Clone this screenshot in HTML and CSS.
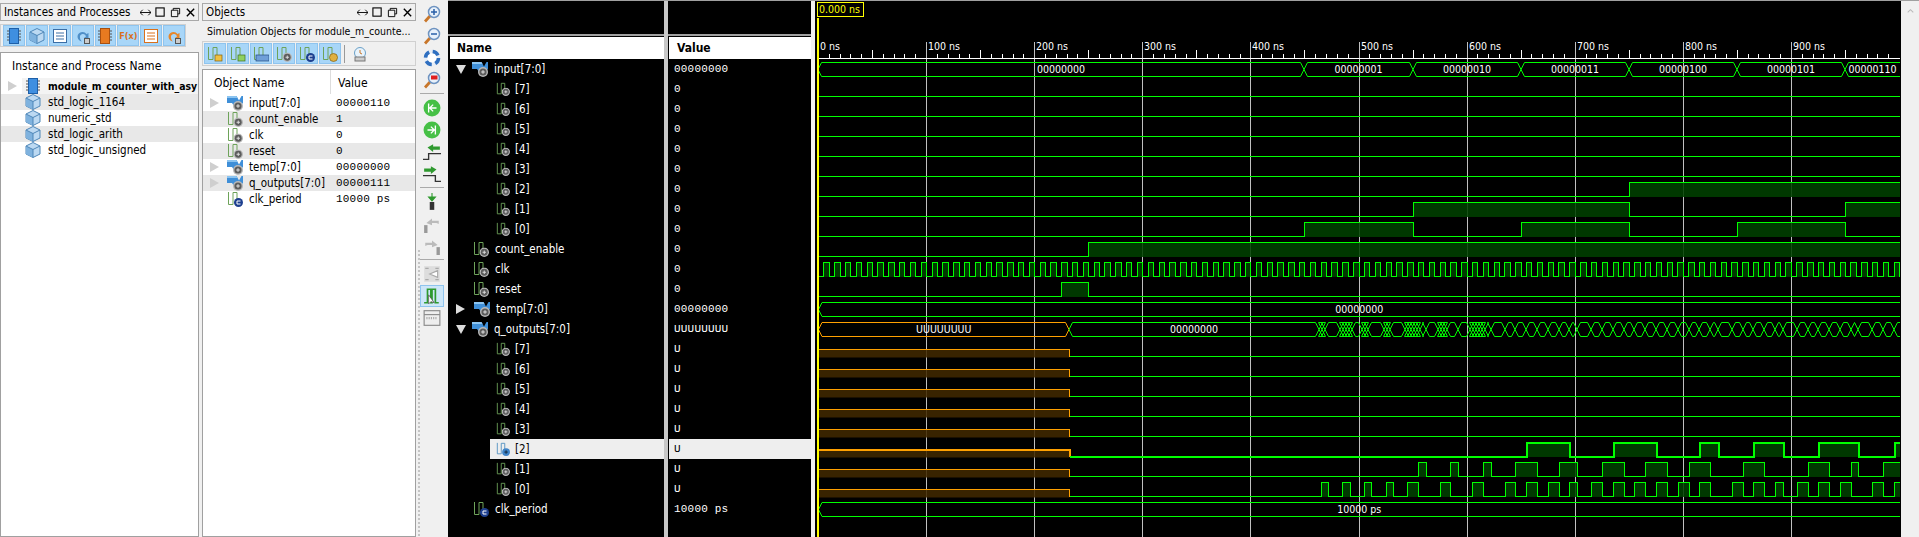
FILE: index.html
```html
<!DOCTYPE html>
<html lang="en">
<head>
    <meta charset="UTF-8">
    <title>Simulation</title>
    <link rel="stylesheet" href="styles.css">
</head>
<body>
    <svg class="defs" width="0" height="0">
        <defs>
            <symbol id="badge" viewBox="0 0 10 10">
                <circle cx="5" cy="5" r="5" fill="#b8b8b8"/>
                <circle cx="5" cy="5" r="3.6" fill="#5c5c5c"/>
                <path d="M3.200 5h3.600M5 3.200v3.600" stroke="#e0e0e0" stroke-width="1"/>
            </symbol>
            <path id="step" d="M1.500 1V13.500H6V1.500H10V9" fill="none" stroke="#6ea35a" stroke-width="1"/>
            <symbol id="sig" viewBox="0 0 16 16">
                <use href="#step"/>
                <use href="#badge" x="6.500" y="6.500" width="9.500" height="9.500"/>
            </symbol>
            <symbol id="sigc" viewBox="0 0 16 16">
                <use href="#step"/>
                <circle cx="11.500" cy="11.500" r="4.500" fill="#1d3f8f"/>
                <path d="M13.500 10h-3.500v3h3.500" fill="none" stroke="#fff" stroke-width="1"/>
            </symbol>
            <symbol id="sigsel" viewBox="0 0 16 16">
                <path d="M1.500 1V13.500H6V1.500H10V9" fill="none" stroke="#4f8fc0" stroke-width="1"/>
                <circle cx="11.500" cy="11.500" r="4.500" fill="#3f84c8"/>
                <path d="M9.500 11.500h4M11.500 9.500v4" stroke="#123" stroke-width="1"/>
            </symbol>
            <symbol id="bus" viewBox="0 0 16 16">
                <path d="M0 1h9.500l2.500 4.500L14.500 1H16v7l-3 3H7L5 8H0z" fill="#3f8fd8"/>
                <path d="M0 1h9.500l1 2H0z" fill="#8cc4f0"/>
                <use href="#badge" x="6" y="6" width="10" height="10"/>
            </symbol>
            <symbol id="chip" viewBox="0 0 16 16">
                <path d="M1 3h14M1 6h14M1 9h14M1 12h14" stroke="#555" stroke-width="1"/>
                <rect x="3.500" y=".5" width="9" height="15" fill="#3f8fe0" stroke="#1d5fa8"/>
            </symbol>
            <symbol id="cube" viewBox="0 0 16 16">
                <path d="M8 .5L15 4v8l-7 3.500L1 12V4z" fill="#bcd9f2" stroke="#4f87b8"/>
                <path d="M8 7.500v8L1 12V4z" fill="#7fb2de"/>
                <path d="M1 4l7 3.500L15 4M8 7.500v8" fill="none" stroke="#4f87b8"/>
            </symbol>
            <symbol id="pkgtool" viewBox="0 0 16 16">
                <rect x="1.500" y="1.500" width="13" height="13" fill="#fff" stroke="#3b6ea5"/>
                <path d="M4 5h8M4 8h8M4 11h8" stroke="#3b6ea5"/>
            </symbol>
            <symbol id="lens" viewBox="0 0 18 18">
                <path d="M2 16.500L7 11" stroke="#c8762a" stroke-width="2.800"/>
                <circle cx="11" cy="7" r="5.500" fill="#e8f1fb" stroke="#6e93c0" stroke-width="1.500"/>
            </symbol>
        </defs>
    </svg>

    <div class="window">
        <section class="panel panel-inst">
            <div class="title-bar">
                <span class="title">Instances and Processes</span>
                <span class="title-btns">
                    <svg viewBox="0 0 12 12"><path d="M0 6h12M3 3L0 6l3 3M9 3l3 3-3 3" fill="none" stroke="#000"/></svg>
                    <svg viewBox="0 0 12 12"><rect x="1" y="1" width="9" height="9" fill="none" stroke="#000" stroke-width="1.200"/></svg>
                    <svg viewBox="0 0 12 12"><path d="M3.500 3.500V1.500H10.500V7.500H8.500M1.500 3.500H8.500V10.500H1.500z" fill="none" stroke="#000"/></svg>
                    <svg viewBox="0 0 12 12"><path d="M2 2l8 8M10 2l-8 8" stroke="#000" stroke-width="1.500"/></svg>
                </span>
            </div>
            <div class="tool-strip inst-strip">
                <span class="tb on"><svg><use href="#chip"/></svg></span>
                <span class="tb on"><svg><use href="#cube"/></svg></span>
                <span class="tb on"><svg><use href="#pkgtool"/></svg></span>
                <span class="tb on"><svg viewBox="0 0 16 16"><path d="M2.500 9a5 5 0 0 1 9-3l2-1v5H9l2-1.500A3 3 0 0 0 5 9.500c0 2 1 3 2 4a5.500 5.500 0 0 1-4.500-4.500z" fill="#4f8fc8"/><rect x="9.500" y="10.500" width="5" height="5" fill="#ccc" stroke="#555"/></svg></span>
                <span class="tb on"><svg viewBox="0 0 16 16"><path d="M1 3h14M1 6h14M1 9h14M1 12h14" stroke="#555"/><rect x="3.500" y=".5" width="9" height="15" fill="#e87a20" stroke="#a85010"/></svg></span>
                <span class="tb on fx">F(x)</span>
                <span class="tb on"><svg viewBox="0 0 16 16"><rect x="1.500" y="1.500" width="13" height="13" fill="#fff" stroke="#d9701c"/><path d="M4 5h8M4 8h8M4 11h8" stroke="#d9701c"/></svg></span>
                <span class="tb on"><svg viewBox="0 0 16 16"><path d="M2.500 9a5 5 0 0 1 9-3l2-1v5H9l2-1.500A3 3 0 0 0 5 9.500c0 2 1 3 2 4a5.500 5.500 0 0 1-4.500-4.500z" fill="#e8862a"/><rect x="9.500" y="10.500" width="5" height="5" fill="#ccc" stroke="#555"/></svg></span>
            </div>
            <div class="table inst-table">
                <div class="thead"><span class="th-inst">Instance and Process Name</span></div>
                <div class="inst-row top-row">
                    <span class="tri-gray"></span>
                    <span class="inst-hl"><svg class="ico"><use href="#chip"/></svg><b>module_m_counter_with_asy</b></span>
                </div>
                <div class="inst-row alt"><svg class="ico"><use href="#cube"/></svg>std_logic_1164</div>
                <div class="inst-row"><svg class="ico"><use href="#cube"/></svg>numeric_std</div>
                <div class="inst-row alt"><svg class="ico"><use href="#cube"/></svg>std_logic_arith</div>
                <div class="inst-row"><svg class="ico"><use href="#cube"/></svg>std_logic_unsigned</div>
            </div>
        </section>

        <section class="panel panel-obj">
            <div class="title-bar">
                <span class="title">Objects</span>
                <span class="title-btns">
                    <svg viewBox="0 0 12 12"><path d="M0 6h12M3 3L0 6l3 3M9 3l3 3-3 3" fill="none" stroke="#000"/></svg>
                    <svg viewBox="0 0 12 12"><rect x="1" y="1" width="9" height="9" fill="none" stroke="#000" stroke-width="1.200"/></svg>
                    <svg viewBox="0 0 12 12"><path d="M3.500 3.500V1.500H10.500V7.500H8.500M1.500 3.500H8.500V10.500H1.500z" fill="none" stroke="#000"/></svg>
                    <svg viewBox="0 0 12 12"><path d="M2 2l8 8M10 2l-8 8" stroke="#000" stroke-width="1.500"/></svg>
                </span>
            </div>
            <div class="subtitle">Simulation Objects for module_m_counte...</div>
            <div class="tool-strip obj-strip">
                <span class="tb on"><svg viewBox="0 0 16 16"><use href="#step"/><rect x="8" y="9" width="7" height="6" fill="#f0c040" stroke="#806010" stroke-width=".7"/></svg></span>
                <span class="tb on"><svg viewBox="0 0 16 16"><use href="#step"/><rect x="8" y="9" width="7" height="6" fill="#8fd060" stroke="#3f7020" stroke-width=".7"/></svg></span>
                <span class="tb on"><svg viewBox="0 0 16 16"><use href="#step"/><rect x="3" y="9" width="13" height="6" fill="#6f9fd8" stroke="#204a80" stroke-width=".7"/></svg></span>
                <span class="tb on"><svg><use href="#sig"/></svg></span>
                <span class="tb on"><svg><use href="#sigc"/></svg></span>
                <span class="tb on"><svg viewBox="0 0 16 16"><use href="#step"/><circle cx="11.500" cy="11.500" r="4" fill="#e0b040" stroke="#806010" stroke-width=".7"/></svg></span>
                <span class="tb-sep"></span>
                <span class="tb"><svg viewBox="0 0 16 16"><circle cx="8" cy="7" r="5.500" fill="#e8f3fb" stroke="#6aa0c8"/><path d="M8 4v3l2 1" fill="none" stroke="#c8762a"/><rect x="3" y="11" width="10" height="4" fill="#ccc" stroke="#777"/></svg></span>
            </div>
            <div class="table obj-table">
                <div class="thead obj-head"><span class="th-name">Object Name</span><span class="th-val">Value</span></div>
                <div class="obj-row"><span class="tri-gray"></span><svg class="ico"><use href="#bus"/></svg><span class="o-name">input[7:0]</span><span class="o-val">00000110</span></div>
                <div class="obj-row alt"><span class="tri-none"></span><svg class="ico"><use href="#sig"/></svg><span class="o-name">count_enable</span><span class="o-val">1</span></div>
                <div class="obj-row"><span class="tri-none"></span><svg class="ico"><use href="#sig"/></svg><span class="o-name">clk</span><span class="o-val">0</span></div>
                <div class="obj-row alt"><span class="tri-none"></span><svg class="ico"><use href="#sig"/></svg><span class="o-name">reset</span><span class="o-val">0</span></div>
                <div class="obj-row"><span class="tri-gray"></span><svg class="ico"><use href="#bus"/></svg><span class="o-name">temp[7:0]</span><span class="o-val">00000000</span></div>
                <div class="obj-row alt"><span class="tri-gray"></span><svg class="ico"><use href="#bus"/></svg><span class="o-name">q_outputs[7:0]</span><span class="o-val">00000111</span></div>
                <div class="obj-row"><span class="tri-none"></span><svg class="ico"><use href="#sigc"/></svg><span class="o-name">clk_period</span><span class="o-val">10000 ps</span></div>
            </div>
        </section>

        <section class="side-tools">
            <span class="st"><svg viewBox="0 0 18 18"><use href="#lens"/><path d="M8 7h6M11 4v6" stroke="#2a5fa8" stroke-width="1.500"/></svg></span>
            <span class="st"><svg viewBox="0 0 18 18"><use href="#lens"/><path d="M8 7h6" stroke="#2a5fa8" stroke-width="1.500"/></svg></span>
            <span class="st"><svg viewBox="0 0 18 18"><circle cx="9" cy="9" r="6.500" fill="#fff" stroke="#e8eef6" stroke-width="3.500"/><circle cx="9" cy="9" r="6.500" fill="none" stroke="#2f6fc0" stroke-width="3.500" stroke-dasharray="6.500 3.700"/></svg></span>
            <span class="st st-end"><svg viewBox="0 0 18 18"><use href="#lens"/><rect x="8" y="4.500" width="6.500" height="4" fill="#e02020"/></svg></span>
            <span class="st"><svg viewBox="0 0 16 16"><circle cx="8" cy="8" r="7.500" fill="#46c046"/><path d="M5 4v8M12 8H6M9 5L6 8l3 3" fill="none" stroke="#fff" stroke-width="1.200"/></svg></span>
            <span class="st"><svg viewBox="0 0 16 16"><circle cx="8" cy="8" r="7.500" fill="#46c046"/><path d="M11 4v8M4 8h6M7 5l3 3-3 3" fill="none" stroke="#fff" stroke-width="1.200"/></svg></span>
            <span class="st"><svg viewBox="0 0 16 16"><path d="M0 14.500h5V9.500h11" fill="none" stroke="#333" stroke-width="1.200"/><path d="M4 4l5-3v2h6v3H9v2z" fill="#2f9a2f"/></svg></span>
            <span class="st st-end"><svg viewBox="0 0 16 16"><path d="M0 9.500h11v5h5" fill="none" stroke="#333" stroke-width="1.200"/><path d="M12 4L7 1v2H1v3h6v2z" fill="#2f9a2f"/></svg></span>
            <span class="st"><svg viewBox="0 0 16 16"><path d="M8 0v4M5 3.500h6L8 7z" stroke="#2f9a2f" fill="#2f9a2f"/><rect x="6" y="8" width="4" height="7" fill="#333"/></svg></span>
            <span class="st"><svg viewBox="0 0 16 16"><rect x="1" y="9" width="3" height="7" fill="#999"/><path d="M3 7l5-4v2h6v3l-2-1H8v2z" fill="#bbb"/></svg></span>
            <span class="st st-end"><svg viewBox="0 0 16 16"><rect x="12" y="9" width="3" height="7" fill="#999"/><path d="M13 7L8 3v2H2v3l2-1h4v2z" fill="#bbb"/></svg></span>
            <span class="st"><svg viewBox="0 0 16 16"><rect x="1" y="1" width="14" height="14" fill="#ddd"/><path d="M2 3h3M11 3h3M2 13h3M11 13h3M13 5L6 8l7 3z" fill="#fff" stroke="#aaa"/></svg></span>
            <span class="st st-on"><svg viewBox="0 0 16 16"><path d="M1 14h3V2h3v12h1V2h3v12h3" fill="none" stroke="#2f9a2f" stroke-width="1.500"/><path d="M5 7v8l2-2 3 1z" fill="#fff" stroke="#555" stroke-width=".7"/></svg></span>
            <span class="st"><svg viewBox="0 0 16 16"><rect x="1" y="1.500" width="14" height="13" fill="#eee" stroke="#888"/><path d="M1 5h14" stroke="#888"/><path d="M3 8h10" stroke="#aaa" stroke-dasharray="1 1" stroke-width="2"/></svg></span>
        </section>

        <section class="sim">
            <div class="col col-name">
                <div class="col-top"></div>
                <div class="col-head">Name</div>
                <div id="nameRows"></div>
            </div>
            <div class="col-gap"></div>
            <div class="col col-value">
                <div class="col-top"></div>
                <div class="col-head">Value</div>
                <div id="valueRows"></div>
            </div>
            <div class="col-gap gap-wave"></div>
            <div class="wave-pane"><svg id="wave" class="wave" viewBox="816 0 1084 537" width="1084" height="537"></svg></div>
            <div class="scroll-strip"><svg viewBox="0 0 10 6"><path d="M1 5l4-4 4 4" fill="none" stroke="#bbb" stroke-width="1.500"/></svg></div>
        </section>
    </div>

    <script src="wave.js"></script>
</body>
</html>
```

FILE: styles.css
```css
* {
    box-sizing: border-box;
}
html,
body {
    margin: 0;
    height: 100%;
    overflow: hidden;
}
body {
    font-family: "DejaVu Sans Condensed", "Liberation Sans", sans-serif;
    font-size: 11.5px;
    color: #000;
    background-color: #f0f0f0;
}
.defs {
    position: absolute;
}
.window {
    display: flex;
    height: 537px;
    width: 1919px;
}
svg {
    display: block;
}

/* left panels */
.panel {
    display: flex;
    flex-direction: column;
    padding-top: 3px;
}
.panel-inst {
    width: 199px;
    margin-right: 3px;
}
.panel-obj {
    width: 214px;
}
.title-bar {
    height: 18px;
    display: flex;
    align-items: center;
    justify-content: space-between;
    border: 1px solid #a9a9a9;
    padding: 0 2px 0 3px;
    white-space: nowrap;
}
.title-btns {
    display: flex;
    gap: 4px;
}
.title-btns svg {
    width: 11px;
    height: 11px;
}
.subtitle {
    height: 20px;
    line-height: 20px;
    padding-left: 5px;
    font-size: 10.5px;
    white-space: nowrap;
}
.tool-strip {
    display: flex;
    align-items: center;
    border: 1px solid #d0d0d0;
}
.inst-strip {
    margin-top: 3px;
    height: 23px;
    width: 186px;
    padding-left: 2px;
    gap: 1px;
}
.obj-strip {
    height: 25px;
    padding-left: 1px;
    gap: 1px;
}
.tb {
    width: 22px;
    height: 21px;
    display: flex;
    align-items: center;
    justify-content: center;
}
.tb.on {
    background-color: #a8d6f8;
    border: 1px solid #8fc4ee;
}
.tb svg {
    width: 16px;
    height: 16px;
}
.tb.fx {
    font-size: 9px;
    font-weight: bold;
    color: #d9701c;
}
.tb-sep {
    width: 1px;
    height: 18px;
    margin: 0 3px 0 2px;
    background-color: #999;
}
.table {
    flex: 1;
    background-color: #fff;
    border: 1px solid #a0a0a0;
}
.inst-table {
    margin-top: 5px;
}
.obj-table {
    margin-top: 3px;
}
.thead {
    height: 25px;
    line-height: 27px;
    font-size: 12px;
}
.th-inst {
    padding-left: 11px;
}
.obj-head {
    display: flex;
}
.th-name {
    width: 128px;
    padding-left: 11px;
    height: 24px;
    border-right: 1px solid #ddd;
}
.th-val {
    padding-left: 7px;
}
.inst-row {
    display: flex;
    align-items: center;
    height: 16px;
}
.inst-row .ico {
    margin: 0 7px 0 24px;
}
.inst-hl {
    flex: 1;
    display: flex;
    align-items: center;
    height: 16px;
    padding-left: 3px;
    background-color: #f3f3f3;
    font-size: 10.4px;
    overflow: hidden;
    white-space: nowrap;
}
.top-row .inst-hl .ico {
    margin: 0 7px 0 0;
}
.alt {
    background-color: #e8e8e8;
}
.ico {
    width: 16px;
    height: 16px;
    flex: none;
}
.tri-gray {
    flex: none;
    width: 0;
    height: 0;
    margin-left: 7px;
    margin-right: 8px;
    border-left: 9px solid #cfcfcf;
    border-top: 5px solid transparent;
    border-bottom: 5px solid transparent;
}
.top-row .tri-gray {
    margin-right: 5px;
}
.tri-none {
    flex: none;
    width: 24px;
}
.obj-row {
    display: flex;
    align-items: center;
    height: 16px;
}
.o-name {
    width: 93px;
    padding-left: 6px;
    flex: none;
    white-space: nowrap;
}
.o-val {
    font-family: "Liberation Mono", monospace;
    font-size: 11px;
    letter-spacing: .2px;
}

/* zoom and cursor tools */
.side-tools {
    width: 32px;
    padding: 3px 2px 0 1px;
    display: flex;
    flex-direction: column;
    align-items: center;
    background-image: repeating-linear-gradient(#c4c4c4 0 2px, transparent 2px 4px);
    background-repeat: no-repeat;
    background-position: 2px 250px;
    background-size: 2px 100%;
}
.st {
    width: 24px;
    height: 22px;
    flex: none;
    display: flex;
    align-items: center;
    justify-content: center;
}
.st svg {
    width: 18px;
    height: 18px;
}
.st-end {
    height: 25px;
    margin-bottom: 3px;
    border-bottom: 1px solid #aaa;
    padding-bottom: 3px;
}
.st-on {
    background-color: #cde6f8;
    border: 1px solid #8fc4ee;
}

/* name, value and wave columns */
.sim {
    flex: 1;
    display: flex;
    background-color: #000;
    border-top: 1px solid #a0a0a0;
}
.col-name {
    width: 216px;
    padding-left: 2px;
}
.col-value {
    width: 143px;
    padding-left: 1px;
}
.col-gap {
    width: 4px;
    background-color: #c8c8c8;
    flex: none;
}
.gap-wave {
    width: 6px;
    background-color: #000;
    border-left: 4px solid #f0f0f0;
}
.col-top {
    height: 35px;
    border-bottom: 2px solid #a0a0a0;
    margin-left: -2px;
}
.col-value .col-top {
    margin-left: -1px;
}
.col-head {
    height: 22px;
    margin-top: 1px;
    line-height: 22px;
    padding-left: 7px;
    background-color: #fff;
    font-weight: bold;
    font-size: 12px;
}
.col-value .col-head {
    padding-left: 8px;
}
.sig-row {
    display: flex;
    align-items: center;
    height: 20px;
    color: #fff;
    white-space: nowrap;
}
.sig-row .ico {
    margin-right: 6px;
}
.sig-row.child {
    padding-left: 46px;
}
.sig-row.child .ico {
    width: 14px;
    height: 16px;
    margin-right: 5px;
}
.sig-row.top {
    padding-left: 23px;
}
.sig-row.has-kids {
    padding-left: 6px;
}
.sig-row.sel {
    color: #000;
}
.sel-band {
    display: flex;
    align-items: center;
    height: 20px;
    margin-left: -6px;
    padding-left: 6px;
    flex: 1;
    background-color: #eee;
}
.tri-white {
    flex: none;
    width: 0;
    height: 0;
    margin-right: 9px;
    border-left: 9px solid #ddd;
    border-top: 5px solid transparent;
    border-bottom: 5px solid transparent;
}
.tri-open {
    margin-right: 6px;
    border-left: 5px solid transparent;
    border-right: 5px solid transparent;
    border-top: 9px solid #ddd;
    border-bottom: 0;
}
.val-row {
    height: 20px;
    line-height: 20px;
    padding-left: 5px;
    color: #fff;
    font-family: "Liberation Mono", monospace;
    font-size: 11px;
    letter-spacing: .2px;
    white-space: pre;
}
.val-row.sel {
    color: #000;
    background-color: #eee;
}
.wave-pane {
    width: 1084px;
    flex: none;
    margin-top: -1px;
}
.wave-text {
    font-family: "DejaVu Sans Condensed", "Liberation Sans", sans-serif;
    font-size: 10.5px;
    fill: #fff;
}
.cursor-text {
    fill: #ffff00;
}
.scroll-strip {
    flex: 1;
    background-color: #f0f0f0;
    padding: 8px 5px 0 6px;
}
```

FILE: wave.js
```js
// time axis: column of 0 ns and pixels per ns
const X0 = 817.5;
const PX = 1.081;
const RIGHT = 1899;
const ROW_TOP = 59;
const ROW_H = 20;
const GREEN = '#00ff00';
const ORANGE = '#ffa000';
const SVG_NS = 'http://www.w3.org/2000/svg';

const input = [[0, '00000000'], [450, '00000001'], [550, '00000010'], [650, '00000011'],
    [750, '00000100'], [850, '00000101'], [950, '00000110']];

// edges of the counted bits, read off in pixels (rising first, then pairs)
const q2 = [1525, 1568, 1612, 1655, 1698, 1717, 1752, 1782, 1817, 1857, 1893];
const q1 = [1417, 1425, 1449, 1457, 1482, 1490, 1514, 1536, 1558, 1576, 1601, 1623, 1644, 1666,
    1688, 1709, 1742, 1763, 1807, 1828, 1850, 1857, 1882];
const q0 = [1320, 1327, 1341, 1349, 1363, 1370, 1385, 1392, 1406, 1417, 1439, 1449, 1471, 1482,
    1504, 1514, 1525, 1536, 1547, 1558, 1568, 1576, 1590, 1601, 1612, 1623, 1633, 1644, 1655, 1666,
    1677, 1688, 1698, 1709, 1731, 1742, 1752, 1763, 1774, 1782, 1796, 1807, 1817, 1828, 1839, 1850,
    1871, 1882, 1893];

function tx(t) {
    return Math.floor(X0 + PX * t) + 0.5;
}

function px(list) {
    return list.map(v => v + 0.5);
}

const clkEdges = [];
for (let t = 5; X0 + PX * t < RIGHT; t += 5) {
    clkEdges.push(tx(t));
}

const rows = [
    { name: 'input[7:0]', val: '00000000', kind: 'bus', open: true },
    { name: '[7]', val: '0', child: true, edges: [] },
    { name: '[6]', val: '0', child: true, edges: [] },
    { name: '[5]', val: '0', child: true, edges: [] },
    { name: '[4]', val: '0', child: true, edges: [] },
    { name: '[3]', val: '0', child: true, edges: [] },
    { name: '[2]', val: '0', child: true, edges: [tx(750)] },
    { name: '[1]', val: '0', child: true, edges: [tx(550), tx(750), tx(950)] },
    { name: '[0]', val: '0', child: true, edges: [tx(450), tx(550), tx(650), tx(750), tx(850), tx(950)] },
    { name: 'count_enable', val: '0', edges: [tx(250)] },
    { name: 'clk', val: '0', edges: clkEdges },
    { name: 'reset', val: '0', edges: [tx(225), tx(250)] },
    { name: 'temp[7:0]', val: '00000000', kind: 'bus', closed: true },
    { name: 'q_outputs[7:0]', val: 'UUUUUUUU', kind: 'bus', open: true },
    { name: '[7]', val: 'U', child: true, undef: true, edges: [] },
    { name: '[6]', val: 'U', child: true, undef: true, edges: [] },
    { name: '[5]', val: 'U', child: true, undef: true, edges: [] },
    { name: '[4]', val: 'U', child: true, undef: true, edges: [] },
    { name: '[3]', val: 'U', child: true, undef: true, edges: [] },
    { name: '[2]', val: 'U', child: true, undef: true, sel: true, edges: px(q2) },
    { name: '[1]', val: 'U', child: true, undef: true, edges: px(q1) },
    { name: '[0]', val: 'U', child: true, undef: true, edges: px(q0) },
    { name: 'clk_period', val: '10000 ps', kind: 'const' }
];

function iconFor(row) {
    if (row.sel) return 'sigsel';
    if (row.kind === 'const') return 'sigc';
    if (row.kind === 'bus') return 'bus';
    return 'sig';
}

function buildLists() {
    const names = document.getElementById('nameRows');
    const values = document.getElementById('valueRows');
    let nameHtml = '';
    let valueHtml = '';
    rows.forEach(row => {
        const icon = `<svg class="ico" viewBox="0 0 16 16"><use href="#${iconFor(row)}"/></svg>`;
        let cls = 'sig-row';
        let tri = '';
        if (row.child) {
            cls += ' child';
        } else if (row.kind === 'bus') {
            cls += ' has-kids';
            tri = row.open ? '<span class="tri-white tri-open"></span>' : '<span class="tri-white"></span>';
        } else {
            cls += ' top';
        }
        if (row.sel) {
            nameHtml += `<div class="${cls} sel"><span class="sel-band">${icon}${row.name}</span></div>`;
            valueHtml += `<div class="val-row sel">${row.val}</div>`;
        } else {
            nameHtml += `<div class="${cls}">${tri}${icon}${row.name}</div>`;
            valueHtml += `<div class="val-row">${row.val}</div>`;
        }
    });
    names.innerHTML = nameHtml;
    values.innerHTML = valueHtml;
}

function el(parent, tag, attrs, text) {
    const node = document.createElementNS(SVG_NS, tag);
    Object.keys(attrs).forEach(k => node.setAttribute(k, attrs[k]));
    if (text) node.textContent = text;
    parent.appendChild(node);
    return node;
}

function line(parent, d, color, width) {
    el(parent, 'path', { d: d, fill: 'none', stroke: color, 'stroke-width': width || 1, 'shape-rendering': 'crispEdges' });
}

// a single bit: edges toggle the level, starting low
function drawBit(svg, top, start, edges, width) {
    const hi = top + 3.5;
    const lo = top + 17.5;
    let level = lo;
    let x = start;
    let d = `M${x} ${level}`;
    const all = edges.concat([RIGHT]);
    all.forEach((e, i) => {
        if (level === hi) {
            el(svg, 'rect', { x: x, y: hi, width: e - x, height: 14.5, fill: '#004000', opacity: 0.88 });
        }
        d += `H${e}`;
        if (i < edges.length) {
            level = level === hi ? lo : hi;
            d += `V${level}`;
        }
        x = e;
    });
    line(svg, d, GREEN, width);
}

// a bus: list of {x, label}; each change is drawn as a crossing,
// changes closer than the crossing width overlap into a lattice
function drawBus(svg, top, segs, end) {
    const hi = top + 3.5;
    const lo = top + 17.5;
    const mid = top + 10.5;
    segs.forEach((seg, i) => {
        const a = seg.x;
        const b = i + 1 < segs.length ? segs[i + 1].x : end;
        const color = seg.color || GREEN;
        const last = i === segs.length - 1;
        const r = last ? b : b - 3.5;
        const d = `M${a} ${mid}L${a + 3.5} ${hi}H${r}` + (last ? '' : `L${b} ${mid}`) +
            `M${a} ${mid}L${a + 3.5} ${lo}H${r}` + (last ? '' : `L${b} ${mid}`);
        el(svg, 'path', { d: d, fill: 'none', stroke: color, 'stroke-width': 1 });
        if (seg.label) {
            el(svg, 'text', { class: 'wave-text', x: (a + b) / 2, y: top + 14, 'text-anchor': 'middle' }, seg.label);
        }
    });
}

// changes of q_outputs: the first pulses of bit 0 are full of glitches
function qBusEdges() {
    const set = new Set(q0.concat(q1, q2));
    for (let i = 0; i + 1 < q0.length && q0[i] < 1480; i += 2) {
        for (let x = q0[i] - 2; x <= q0[i + 1] + 2; x += 3) {
            set.add(x);
        }
        set.delete(q0[i]);
        set.delete(q0[i + 1]);
    }
    return Array.from(set).sort((a, b) => a - b);
}

function drawWave() {
    const svg = document.getElementById('wave');

    // grid and ruler
    for (let t = 0; t < 1000; t += 100) {
        const x = tx(t);
        line(svg, `M${x} 42V537`, '#c0c0c0');
        el(svg, 'text', { class: 'wave-text', x: x + 1.5, y: 50 }, `${t} ns`);
    }
    for (let t = 10; X0 + PX * t < RIGHT; t += 10) {
        if (t % 100 === 0) continue;
        const x = tx(t);
        line(svg, `M${x} ${t % 50 === 0 ? 50 : 54}V58`, '#ffffff');
    }
    line(svg, `M817 58.5H${RIGHT}`, '#ffffff');

    rows.forEach((row, i) => {
        const top = ROW_TOP + ROW_H * i;
        if (row.undef) {
            const end = 1068.5;
            el(svg, 'rect', { x: X0, y: top + 10.5, width: end - X0, height: 8, fill: '#402800', opacity: 0.88 });
            line(svg, `M${X0} ${top + 10.5}H${end}V${top + 17.5}`, ORANGE, row.sel ? 2 : 1);
            drawBit(svg, top, end, row.edges, row.sel ? 2 : 1);
        } else if (row.edges) {
            drawBit(svg, top, X0, row.edges, 1);
        }
    });

    drawBus(svg, ROW_TOP, input.map(v => ({ x: tx(v[0]) - 0.5, label: v[1] })), RIGHT);
    drawBus(svg, ROW_TOP + ROW_H * 12, [{ x: X0, label: '00000000' }], RIGHT);
    drawBus(svg, ROW_TOP + ROW_H * 22, [{ x: X0, label: '10000 ps' }], RIGHT);

    const qSegs = [{ x: X0, label: 'UUUUUUUU', color: ORANGE }, { x: 1068, label: '00000000' }];
    qBusEdges().forEach(e => qSegs.push({ x: e }));
    drawBus(svg, ROW_TOP + ROW_H * 13, qSegs, RIGHT);

    // cursor
    el(svg, 'rect', { x: 816, y: 18, width: 2, height: 519, fill: '#ffff00' });
    el(svg, 'rect', { x: 816.5, y: 2.5, width: 46, height: 14, fill: 'none', stroke: '#ffff00' });
    el(svg, 'text', { class: 'wave-text cursor-text', x: 818, y: 13 }, '0.000 ns');
}

buildLists();
drawWave();
```
